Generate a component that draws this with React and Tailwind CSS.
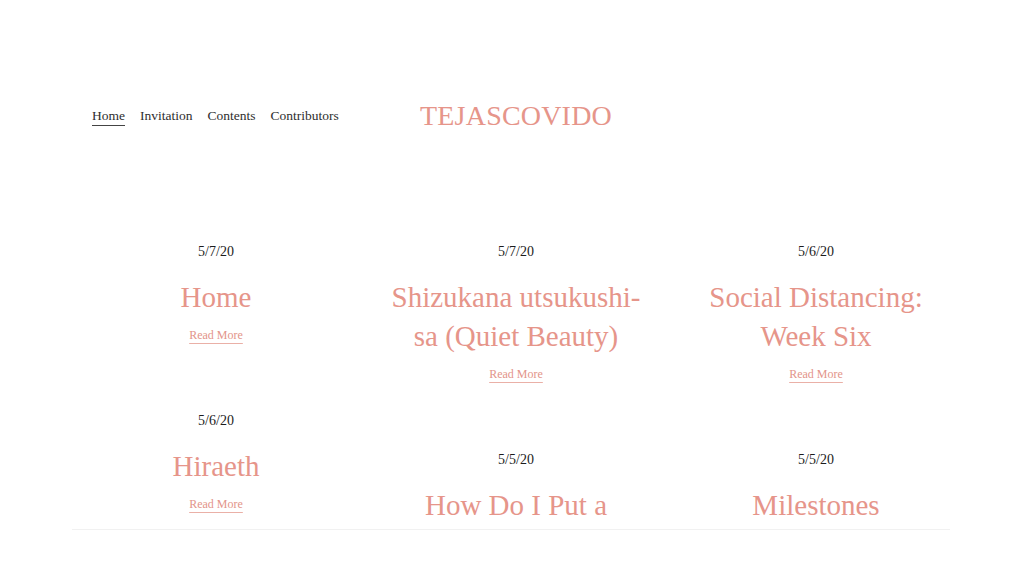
import React from 'react';

const columns = [
  [
    { date: '5/7/20', title: 'Home', more: true },
    { date: '5/6/20', title: 'Hiraeth', more: true },
  ],
  [
    { date: '5/7/20', title: 'Shizukana utsukushi-sa (Quiet Beauty)', more: true },
    { date: '5/5/20', title: 'How Do I Put a' },
  ],
  [
    { date: '5/6/20', title: 'Social Distancing: Week Six', more: true },
    { date: '5/5/20', title: 'Milestones' },
  ],
];

const nav = ['Home', 'Invitation', 'Contents', 'Contributors'];

function Post({ date, title, more }) {
  return (
    <article className="flex flex-col items-center text-center mb-[68px]">
      <div className="text-[14px] leading-[20px] text-[#1c1c1c]">{date}</div>
      <h2 className="mt-[16px] text-[29px] leading-[39px] text-[#e6958a]">{title}</h2>
      {more && (
        <a
          href="#"
          className="mt-[10px] text-[12px] leading-[16px] text-[#e39489] underline underline-offset-[4px] decoration-[#eab0a7]"
        >
          Read More
        </a>
      )}
    </article>
  );
}

export default function App() {
  return (
    <div
      className="min-h-[576px] bg-white"
      style={{ fontFamily: '"Liberation Serif", "Times New Roman", serif' }}
    >
      <div className="ml-[66px] w-[900px] pt-[100px]">
        <header className="relative h-[32px] flex items-center">
          <nav className="ml-[26px] flex items-center gap-[15px] text-[13.5px] text-[#2e2e2e]">
            {nav.map((n, i) => (
              <a
                key={n}
                href="#"
                className={
                  i === 0
                    ? 'border-b-[1.5px] border-[#444] leading-[18px] pt-[1px]'
                    : 'border-b-[1.5px] border-transparent leading-[18px] pt-[1px]'
                }
              >
                {n}
              </a>
            ))}
          </nav>
          <div className="absolute left-1/2 -translate-x-1/2 text-[28px] leading-[32px] text-[#e6958a] tracking-[0.2px]">
            TEJASCOVIDO
          </div>
        </header>

        <main className="mt-[110px] h-[287px] overflow-hidden grid grid-cols-3">
          {columns.map((col, ci) => (
            <div key={ci} className="px-[15px]">
              {col.map((p, pi) => (
                <Post key={pi} {...p} />
              ))}
            </div>
          ))}
        </main>
      </div>
      <div className="ml-[72px] w-[878px] border-t border-[#f1f1f1]" />
    </div>
  );
}
